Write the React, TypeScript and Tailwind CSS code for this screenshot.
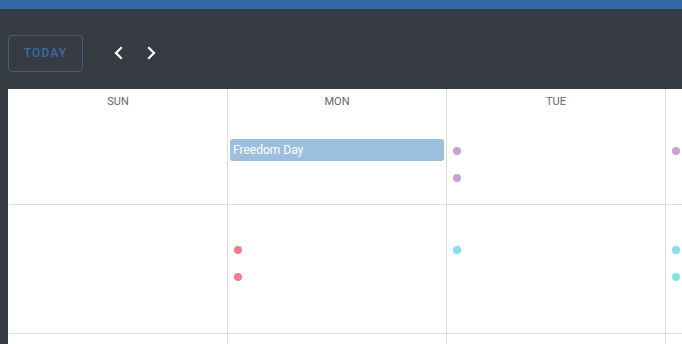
import React from "react";

type Slot = { kind: "event"; label: string } | { kind: "dot"; color: string } | { kind: "empty" };

const row1: Slot[][] = [
  [],
  [{ kind: "event", label: "Freedom Day" }],
  [{ kind: "dot", color: "#c8a0d3" }, { kind: "dot", color: "#c8a0d3" }],
  [{ kind: "dot", color: "#c8a0d3" }],
];
const row2: Slot[][] = [
  [],
  [{ kind: "dot", color: "#f27d90" }, { kind: "dot", color: "#f27d90" }],
  [{ kind: "dot", color: "#80e1e6" }],
  [{ kind: "dot", color: "#80e1e6" }, { kind: "dot", color: "#80e1e6" }],
];
const days = ["SUN", "MON", "TUE", ""];

function Slots({ slots }: { slots: Slot[] }) {
  return (
    <div className="flex flex-col gap-[5px]">
      {slots.map((s, i) =>
        s.kind === "event" ? (
          <div
            key={i}
            className="mx-[2px] h-[22px] rounded-[3px] bg-[#9bbfdd] pl-[3px] text-[12px] leading-[22px] text-white"
          >
            {s.label}
          </div>
        ) : s.kind === "dot" ? (
          <div key={i} className="flex h-[22px] items-center pl-[6px] pt-[2px]">
            <div className="h-[8px] w-[8px] rounded-full" style={{ backgroundColor: s.color }} />
          </div>
        ) : (
          <div key={i} className="h-[22px]" />
        )
      )}
    </div>
  );
}

export default function App() {
  return (
    <div
      className="h-[344px] w-[682px] overflow-hidden bg-[#373b44]"
      style={{ fontFamily: "Roboto, 'Liberation Sans', sans-serif" }}
    >
      <div className="h-[9px] bg-[#3568a6]" />
      <div className="flex h-[80px] items-center pl-[8px] pt-[8px]">
        <div className="flex h-[37px] w-[75px] items-center justify-center rounded-[4px] border border-[#3b5f91] text-[12px] font-medium tracking-[1.2px] text-[#3d6aa6]">
          TODAY
        </div>
        <div className="ml-[29px] flex items-center gap-[18px]">
          <svg width="14" height="14" viewBox="0 0 14 14" fill="none">
            <path d="M9 2 L4 7 L9 12" stroke="white" strokeWidth="2.2" strokeLinecap="square" />
          </svg>
          <svg width="14" height="14" viewBox="0 0 14 14" fill="none">
            <path d="M5 2 L10 7 L5 12" stroke="white" strokeWidth="2.2" strokeLinecap="square" />
          </svg>
        </div>
      </div>
      <div className="ml-[8px] bg-white pl-[1px]">
        <div className="grid grid-cols-[219px_219px_219px_219px]">
          {days.map((d, i) => (
            <div key={"h" + i} className="h-[116px] border-b border-r border-[#dcdcdc]">
              <div className="h-[19px] pt-[6px] text-center text-[11px] leading-[13px] text-[#666666]">{d}</div>
              <div className="pt-[31px]">
                <Slots slots={row1[i]} />
              </div>
            </div>
          ))}
          {days.map((_, i) => (
            <div key={"r" + i} className="h-[129px] border-b border-r border-[#dcdcdc] pt-[33px]">
              <Slots slots={row2[i]} />
            </div>
          ))}
          {days.map((_, i) => (
            <div key={"e" + i} className="h-[60px] border-r border-[#dcdcdc]" />
          ))}
        </div>
      </div>
    </div>
  );
}
